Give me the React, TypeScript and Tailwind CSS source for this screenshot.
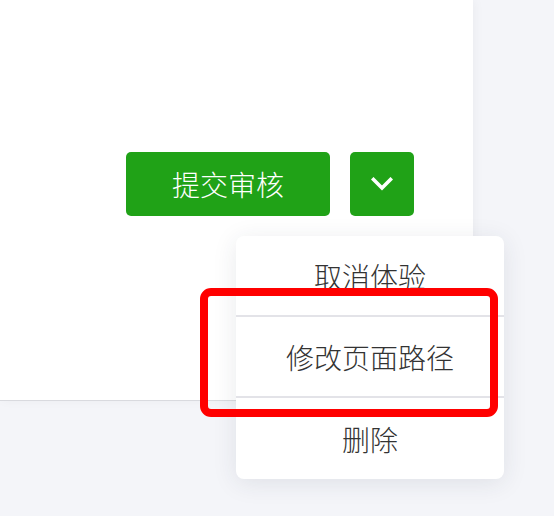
import type { ReactNode } from 'react'

const font = { fontFamily: '"Noto Sans CJK SC", "Noto Sans", sans-serif' }

function MenuItem({ children, last }: { children: ReactNode; last?: boolean }) {
  return (
    <div
      className={`h-[81px] flex items-center justify-center text-[28px] font-light text-[#333333] ${
        last ? '' : 'border-b-2 border-[#e3e3e8]'
      }`}
    >
      {children}
    </div>
  )
}

export default function App() {
  return (
    <div className="relative w-[554px] h-[516px] overflow-hidden bg-[#f4f5f9]" style={font}>
      <div className="w-[473px] h-[401px] bg-white border-b border-[#d9dadf] shadow-[2px_0_10px_rgba(0,0,0,0.04)]">
        <div className="flex gap-[20px] pt-[152px] pl-[126px]">
          <button className="w-[204px] h-[64px] rounded-[5px] bg-[#20a217] text-white text-[28px] font-light flex items-center justify-center">
            提交审核
          </button>
          <button className="w-[64px] h-[64px] rounded-[5px] bg-[#20a217] flex items-center justify-center">
            <svg width="22" height="14" viewBox="0 0 22 14" fill="none">
              <path d="M2.5 2.5 L11 11 L19.5 2.5" stroke="white" strokeWidth="3.6" strokeLinecap="square" />
            </svg>
          </button>
        </div>
      </div>

      <div className="absolute left-[236px] top-[236px] w-[268px] rounded-[8px] bg-white shadow-[0_4px_24px_rgba(40,45,70,0.10)]">
        <MenuItem>取消体验</MenuItem>
        <MenuItem>修改页面路径</MenuItem>
        <MenuItem last>删除</MenuItem>
      </div>

      <div className="absolute left-[200px] top-[288px] w-[298px] h-[129px] rounded-[11px] border-[8px] border-[#ff0000]" />
    </div>
  )
}
